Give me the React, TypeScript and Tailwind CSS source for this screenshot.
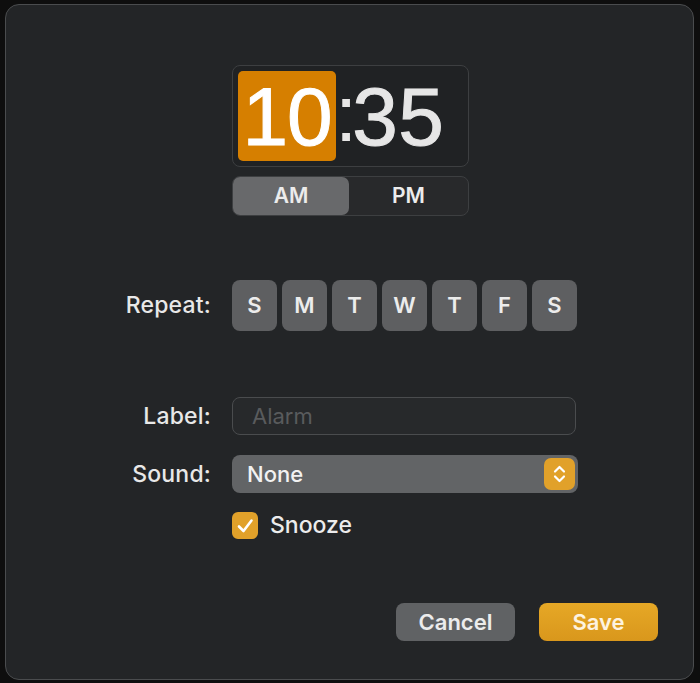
import React from "react";

const days = ["S", "M", "T", "W", "T", "F", "S"];

export default function App() {
  return (
    <div
      className="w-[700px] h-[683px] bg-[#0e0e0e] pt-[4px] pl-[5px] overflow-hidden"
      style={{ fontFamily: "Inter, 'Liberation Sans', sans-serif" }}
    >
      <div className="w-[689px] h-[676px] rounded-[14px] border border-[#4a4c4e] bg-[#232527] flex flex-col">
        {/* Time */}
        <div className="ml-[226px] mt-[60px] w-[237px] h-[102px] rounded-[8px] border border-[#3d3f41] bg-[#202224] flex items-center pl-[5px]">
          <div className="w-[98px] h-[90px] rounded-[5px] bg-[#d67f00] flex items-center justify-center">
            <span
              className="text-[82px] leading-none text-white tracking-[-1px] mt-[2px] [-webkit-text-stroke:1px_white]"
              style={{ fontFamily: "'Liberation Sans', sans-serif" }}
            >
              10
            </span>
          </div>
          <span
            className="text-[80px] leading-none text-[#e6e6e6] ml-[-1px] tracking-[-5px] mt-[-4px]"
            style={{ fontFamily: "'Liberation Sans', sans-serif" }}
          >
            :
          </span>
          <span
            className="text-[82px] leading-none text-[#e6e6e6] tracking-[0.5px] mt-[2px] [-webkit-text-stroke:1px_#e6e6e6]"
            style={{ fontFamily: "'Liberation Sans', sans-serif" }}
          >
            35
          </span>
        </div>
        {/* AM/PM */}
        <div className="ml-[226px] mt-[9px] w-[237px] h-[40px] rounded-[8px] border border-[#3d3f41] bg-[#28292b] flex">
          <div className="w-[116px] h-full rounded-[7px] bg-[#68696b] flex items-center justify-center text-[21px] font-semibold text-[#ececec]">
            AM
          </div>
          <div className="flex-1 flex items-center justify-center text-[21px] font-semibold text-[#ececec]">
            PM
          </div>
        </div>
        {/* Repeat */}
        <div className="mt-[64px] flex items-center">
          <div className="w-[205px] text-right text-[23px] font-medium text-[#e8e8e8] tracking-[0.2px]">
            Repeat:
          </div>
          <div className="ml-[21px] flex gap-[5px]">
            {days.map((d, i) => (
              <div
                key={i}
                className="w-[45px] h-[51px] rounded-[8px] bg-[#5e5f61] flex items-center justify-center text-[22px] font-semibold text-[#ececec]"
              >
                {d}
              </div>
            ))}
          </div>
        </div>
        {/* Label */}
        <div className="mt-[66px] flex items-center">
          <div className="w-[205px] text-right text-[23px] font-medium text-[#e8e8e8] tracking-[0.2px]">
            Label:
          </div>
          <div className="ml-[21px] w-[344px] h-[38px] rounded-[8px] border border-[#4a4c4e] bg-[#27292b] flex items-center pl-[19px] text-[22px] text-[#595b5d]">
            Alarm
          </div>
        </div>
        {/* Sound */}
        <div className="mt-[20px] flex items-center">
          <div className="w-[205px] text-right text-[23px] font-medium text-[#e8e8e8] tracking-[0.2px]">
            Sound:
          </div>
          <div className="ml-[21px] w-[346px] h-[38px] rounded-[8px] bg-[#626466] flex items-center justify-between pl-[15px] pr-[3px]">
            <span className="text-[22px] font-medium text-[#f2f2f2]">None</span>
            <div className="w-[31px] h-[32px] rounded-[7px] bg-[#e1a12a] flex items-center justify-center">
              <svg width="31" height="32" viewBox="0 0 31 32" fill="none">
                <path d="M11 13.5 L15.5 9 L20 13.5" stroke="white" strokeWidth="2.2" strokeLinecap="round" strokeLinejoin="round" />
                <path d="M11 18.5 L15.5 23 L20 18.5" stroke="white" strokeWidth="2.2" strokeLinecap="round" strokeLinejoin="round" />
              </svg>
            </div>
          </div>
        </div>
        {/* Snooze */}
        <div className="mt-[19px] ml-[226px] flex items-center h-[27px]">
          <div className="w-[26px] h-[27px] rounded-[6px] bg-[#e1a12a] flex items-center justify-center">
            <svg width="20" height="20" viewBox="0 0 20 20" fill="none">
              <path d="M4 10.5 L8.5 15 L16.5 4.5" stroke="white" strokeWidth="2.6" strokeLinecap="round" strokeLinejoin="round" />
            </svg>
          </div>
          <span className="ml-[12px] text-[23px] font-medium text-[#ececec]">Snooze</span>
        </div>
        {/* Buttons */}
        <div className="mt-[64px] flex justify-end pr-[35px] gap-[24px]">
          <div className="w-[119px] h-[38px] rounded-[8px] bg-[#606264] flex items-center justify-center text-[22px] font-semibold text-[#ececec]">
            Cancel
          </div>
          <div className="w-[119px] h-[38px] rounded-[8px] bg-gradient-to-b from-[#e6a826] to-[#d9971c] flex items-center justify-center text-[22px] font-semibold text-[#fdf3e0]">
            Save
          </div>
        </div>
      </div>
    </div>
  );
}
